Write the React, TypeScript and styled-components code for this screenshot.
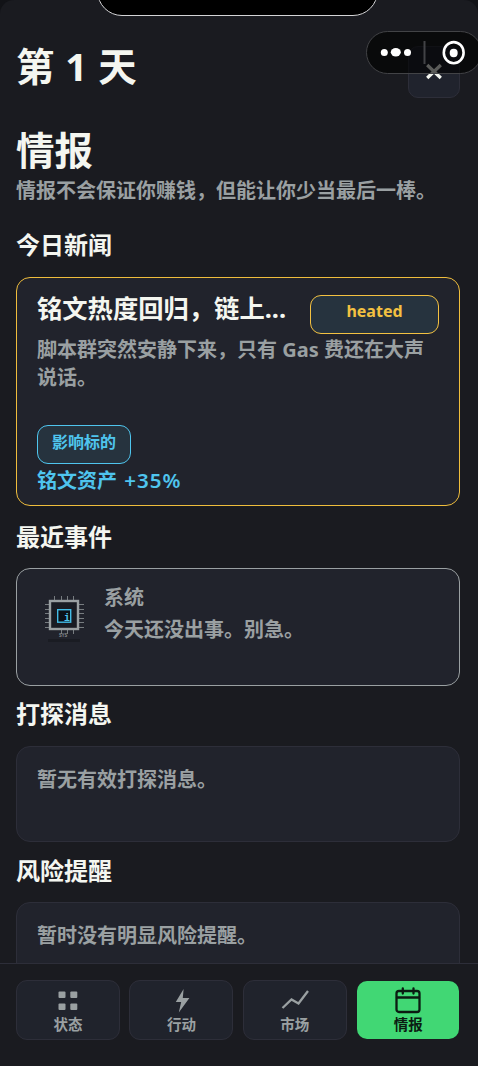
import React from "react";
import styled, { createGlobalStyle } from "styled-components";

const GlobalStyle = createGlobalStyle`
  * { box-sizing: border-box; }
  body {
    margin: 0;
    background: #121317;
    font-family: "Noto Sans", "Noto Sans CJK SC", sans-serif;
    font-weight: 700;
  }
`;

const Screen = styled.div`
  position: relative;
  display: flex;
  flex-direction: column;
  width: 478px;
  height: 1066px;
  overflow: hidden;
  border-radius: 14px 14px 0 0;
  background: #1a1b20;
  color: #f4f6f0;
`;

const Notch = styled.div`
  position: absolute;
  top: -34px;
  left: 97px;
  width: 281px;
  height: 50px;
  border: 1px solid #d4d4d6;
  border-radius: 25px;
  background: #000;
`;

const Capsule = styled.div`
  position: absolute;
  top: 31px;
  left: 366px;
  width: 116px;
  height: 43px;
  border: 1px solid #424346;
  border-radius: 22px;
  background: rgba(0, 0, 0, 0.63);
  svg { display: block; }
`;

const Header = styled.header`
  display: flex;
  flex: none;
  justify-content: space-between;
  height: 97px;
  padding: 46px 18px 0 16px;
`;

const DayTitle = styled.h1`
  margin: 0;
  font-size: 38.4px;
  line-height: 41px;
  word-spacing: 1px;
`;

const CloseButton = styled.button`
  display: flex;
  align-items: center;
  justify-content: center;
  width: 52px;
  height: 52px;
  padding: 0;
  border: 1px solid #2d2e39;
  border-radius: 10px;
  background: #20232d;
`;

const Content = styled.main`
  flex: 1;
  min-height: 0;
  overflow: hidden;
  padding: 29px 18px 0 16px;
`;

const PageTitle = styled.h2`
  margin: 0;
  font-size: 38.5px;
  line-height: 48px;
`;

const Subtitle = styled.p`
  margin: 1px 0 0;
  color: #9aa0a2;
  font-size: 20px;
  line-height: 31px;
  white-space: nowrap;
`;

const SectionTitle = styled.h3<{ $top: number }>`
  margin: ${(p) => p.$top}px 0 0;
  font-size: 24px;
  line-height: 32px;
`;

const Card = styled.section<{ $height: number; $top: number; $border?: string }>`
  width: 444px;
  height: ${(p) => p.$height}px;
  margin-top: ${(p) => p.$top}px;
  padding: 15px 20px 0;
  border: 1px solid ${(p) => p.$border ?? "#2d2e39"};
  border-radius: 14px;
  background: #21232c;
`;

const NoticeCard = styled(Card)`
  padding-top: 19px;
`;

const NewsHead = styled.div`
  display: flex;
  justify-content: space-between;
  height: 43px;
`;

const NewsTitle = styled.div`
  font-size: 25.3px;
  line-height: 31px;
  white-space: nowrap;
`;

const Tag = styled.div<{ $color: string; $width: number }>`
  width: ${(p) => p.$width}px;
  height: 39px;
  border: 1px solid ${(p) => p.$color};
  border-radius: 11px;
  background: #26333e;
  color: ${(p) => p.$color};
  font-size: 16px;
  line-height: 33px;
  text-align: center;
`;

const HeadTag = styled(Tag)`
  margin-top: 2px;
  line-height: 31px;
`;

const Body = styled.p`
  margin: 0;
  color: #9aa0a2;
  font-size: 20px;
  line-height: 28px;
`;

const NewsBody = styled(Body)`
  height: 89px;
`;

const Impact = styled.div`
  color: #4fc5ee;
  font-size: 20px;
  line-height: 32px;
  word-spacing: 2px;
`;

const Change = styled.span`
  font-size: 20.5px;
  font-weight: 600;
  letter-spacing: 1px;
`;

const EventRow = styled.div`
  display: flex;
`;

const EventIcon = styled.svg`
  flex: none;
  width: 54px;
  height: 60px;
  margin-top: 6px;
`;

const EventText = styled.div`
  margin: -2px 0 0 13px;
  color: #9aa0a2;
  font-size: 20px;
  line-height: 32px;
`;

const NavBar = styled.nav`
  display: grid;
  flex: none;
  grid-template-columns: repeat(4, 104px);
  column-gap: 9.4px;
  height: 103px;
  padding: 16px 0 0 16px;
  border-top: 1px solid #2d2e39;
`;

const NavItem = styled.button<{ $active?: boolean }>`
  display: flex;
  flex-direction: column;
  align-items: center;
  height: 60px;
  padding: 4px 0 0;
  border: 1px solid ${(p) => (p.$active ? "transparent" : "#2d2e39")};
  border-radius: 11px;
  background: ${(p) => (p.$active ? "#41d774" : "#20232c")};
  background-clip: ${(p) => (p.$active ? "padding-box" : "border-box")};
  color: ${(p) => (p.$active ? "#0b1c12" : "#9aa0a2")};
  font-family: inherit;
  font-size: 14.5px;
  font-weight: 700;
  line-height: 20px;
  svg { flex: none; display: block; margin-bottom: -1px; }
`;

const ChipIcon = () => (
  <EventIcon viewBox="0 0 54 60">
    <g stroke="#777c80" strokeWidth="1">
      <path d="M17.5 6v34M24.5 6v38M30.5 6v38M36.5 6v38M8 14.5h39M8 19.5h39M8 23.5h39M8 28.5h39M8 32.5h39M8 37.5h39" />
    </g>
    <rect x="13" y="11" width="28" height="28" fill="#191c23" stroke="#9aa0a2" strokeWidth="2.4" />
    <rect x="20.7" y="19.7" width="13" height="12.5" fill="#0b1016" stroke="#43bce5" strokeWidth="1.4" />
    <text x="27" y="30.5" fill="#4fc5ee" fontFamily="Liberation Mono" fontSize="10" fontWeight="700">i</text>
    <text x="22" y="46.5" fill="#858a8e" fontFamily="Liberation Mono" fontSize="4.5">SYS</text>
    <rect x="11" y="49" width="32" height="3" fill="#1a1c23" />
  </EventIcon>
);

const tabs = [
  {
    label: "状态",
    icon: (
      <g fill="currentColor">
        <rect x="4.5" y="6.5" width="7" height="6.5" rx="1" />
        <rect x="16.3" y="6.5" width="7" height="6.5" rx="1" />
        <rect x="4.5" y="18.5" width="7" height="6.5" rx="1" />
        <rect x="16.3" y="18.5" width="7" height="6.5" rx="1" />
      </g>
    ),
  },
  { label: "行动", icon: <path d="M16.6 4 8.8 17h5.4l-2.4 10.5L22.4 13h-6.6z" fill="currentColor" /> },
  {
    label: "市场",
    icon: <path d="m1.5 23 9-8.5 7 4L27 6" fill="none" stroke="currentColor" strokeWidth="2.3" />,
  },
  {
    label: "情报",
    icon: (
      <g fill="none" stroke="currentColor" strokeWidth="2.3" strokeLinecap="round">
        <rect x="2.5" y="6" width="23" height="21" rx="2.5" />
        <path d="M3 12.5h22M8.8 3.5v5M19.5 3.5v5" />
      </g>
    ),
  },
];

export default function App() {
  return (
    <>
      <GlobalStyle />
      <Screen>
        <Header>
          <DayTitle>第 1 天</DayTitle>
          <CloseButton aria-label="关闭">
            <svg width="18" height="18" viewBox="0 0 18 18">
              <path d="m2.2 2 13.6 13m0-13-13.6 13" stroke="#f4f6f0" strokeWidth="3.2" />
            </svg>
          </CloseButton>
        </Header>
        <Content>
          <PageTitle>情报</PageTitle>
          <Subtitle>情报不会保证你赚钱，但能让你少当最后一棒。</Subtitle>
          <SectionTitle $top={23}>今日新闻</SectionTitle>
          <Card $height={229} $top={16} $border="#efbd3c">
            <NewsHead>
              <NewsTitle>铭文热度回归，链上...</NewsTitle>
              <HeadTag $color="#f3c141" $width={129}>heated</HeadTag>
            </NewsHead>
            <NewsBody>脚本群突然安静下来，只有 Gas 费还在大声说话。</NewsBody>
            <Tag $color="#4fc5ee" $width={94}>影响标的</Tag>
            <Impact>铭文资产 <Change>+35%</Change></Impact>
          </Card>
          <SectionTitle $top={15}>最近事件</SectionTitle>
          <Card $height={118} $top={15} $border="#9aa0a2">
            <EventRow>
              <ChipIcon />
              <EventText>
                <div>系统</div>
                <div>今天还没出事。别急。</div>
              </EventText>
            </EventRow>
          </Card>
          <SectionTitle $top={12}>打探消息</SectionTitle>
          <NoticeCard $height={96} $top={16}>
            <Body>暂无有效打探消息。</Body>
          </NoticeCard>
          <SectionTitle $top={13}>风险提醒</SectionTitle>
          <NoticeCard $height={96} $top={15}>
            <Body>暂时没有明显风险提醒。</Body>
          </NoticeCard>
        </Content>
        <NavBar>
          {tabs.map((tab) => (
            <NavItem key={tab.label} $active={tab.label === "情报"}>
              <svg width="28" height="30" viewBox="0 0 28 30">{tab.icon}</svg>
              {tab.label}
            </NavItem>
          ))}
        </NavBar>
        <Notch />
        <Capsule>
          <svg width="114" height="41" viewBox="0 0 114 41">
            <g fill="#fff">
              <circle cx="17.3" cy="20.5" r="3.5" />
              <ellipse cx="28.8" cy="20.2" rx="5" ry="4.2" />
              <circle cx="40.5" cy="20.5" r="3.5" />
              <ellipse cx="86.7" cy="21" rx="4" ry="4.2" />
            </g>
            <path d="M57.5 9v23" stroke="#424346" strokeWidth="2" />
            <ellipse cx="86.7" cy="20.7" rx="9.9" ry="10.6" fill="none" stroke="#fff" strokeWidth="2.6" />
          </svg>
        </Capsule>
      </Screen>
    </>
  );
}
